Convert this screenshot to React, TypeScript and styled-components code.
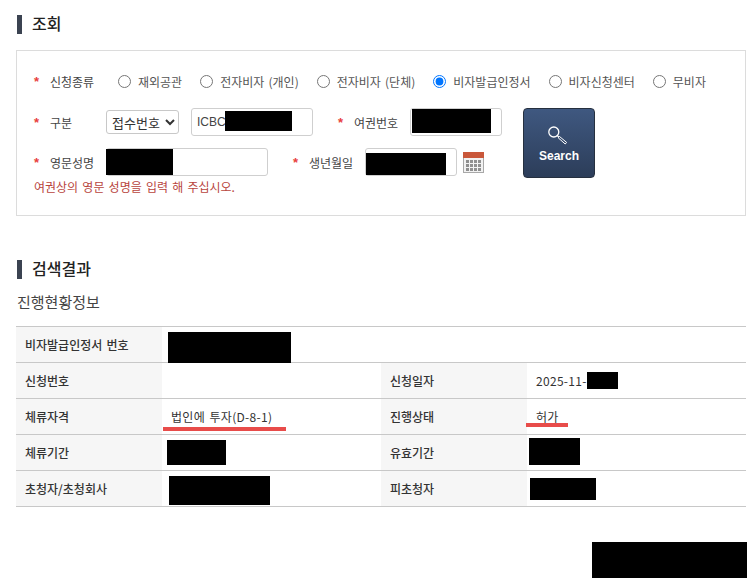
import React from "react";
import styled, { createGlobalStyle } from "styled-components";

const GlobalStyle = createGlobalStyle`
  html, body {
    margin: 0;
    padding: 0;
    background: #fff;
  }
  body {
    width: 755px;
    height: 584px;
    overflow: hidden;
    font-family: "Noto Sans CJK KR", "Noto Sans", sans-serif;
    font-size: 12px;
    word-spacing: 1.5px;
    color: #333;
  }
`;

const Page = styled.div`
  position: relative;
  width: 755px;
  height: 584px;
  padding: 15px 9px 0 16px;
  box-sizing: border-box;
`;

const SectionTitle = styled.h2`
  display: flex;
  align-items: center;
  box-sizing: border-box;
  height: 19px;
  margin: 0 0 0 1px;
  padding: 0 0 2px 10px;
  border-left: 5px solid #3b4351;
  font-size: 16px;
  font-weight: 500;
  line-height: 17px;
  color: #222;
`;

const SearchPanel = styled.div`
  box-sizing: border-box;
  width: 730px;
  height: 166px;
  margin: 16px 0 44px;
  padding: 20px 0 0 17px;
  border: 1px solid #dcdcdc;
`;

const FormRow = styled.div<{ $height: number }>`
  display: flex;
  align-items: center;
  height: ${(props) => props.$height}px;
`;

const RadioRow = styled(FormRow)`
  margin-bottom: 17px;
`;

const FormBody = styled.div`
  display: flex;
  height: 70px;
`;

const FieldColumn = styled.div`
  width: 489px;
`;

const FieldRows = styled.div`
  display: flex;
  flex-direction: column;
  gap: 12px;
`;

const FieldLabel = styled.label<{ $width: number; $gap?: number }>`
  display: flex;
  align-items: center;
  flex: none;
  width: ${(props) => props.$width}px;
  margin-left: ${(props) => props.$gap ?? 0}px;
  white-space: nowrap;
  color: #444;

  &::before {
    content: "*";
    width: 16px;
    flex: none;
    color: #e8403c;
    font-family: "Liberation Sans", sans-serif;
    font-size: 13px;
    font-weight: 700;
  }
`;

const RadioGroup = styled.div`
  display: flex;
  align-items: center;
  gap: 18px;
  margin-left: 18px;
`;

const RadioItem = styled.label`
  display: flex;
  align-items: center;
  gap: 7px;
  white-space: nowrap;
  color: #555;
`;

const RadioInput = styled.input`
  width: 13px;
  height: 13px;
  margin: 0;
`;

const SelectBox = styled.select`
  box-sizing: border-box;
  width: 73px;
  height: 24px;
  margin-right: 12px;
  padding: 0 0 0 1px;
  border: 1px solid #c8c8c8;
  border-radius: 3px;
  background: #fff;
  color: #333;
  font-family: inherit;
  font-size: 13px;
`;

const InputBox = styled.div<{ $width: number }>`
  position: relative;
  box-sizing: border-box;
  flex: none;
  width: ${(props) => props.$width}px;
  height: 28px;
  padding-left: 5px;
  border: 1px solid #cfcfcf;
  border-radius: 3px;
  background: #fff;
  font-family: "Liberation Sans", sans-serif;
  font-size: 12px;
  line-height: 26px;
  color: #444;
`;

const Redaction = styled.div<{ $x: number; $y: number; $w: number; $h: number }>`
  position: absolute;
  left: ${(props) => props.$x}px;
  top: ${(props) => props.$y}px;
  width: ${(props) => props.$w}px;
  height: ${(props) => props.$h}px;
  background: #000;
`;

const CalendarButton = styled.span`
  display: flex;
  margin-left: 6px;
`;

const HintText = styled.p`
  margin: 2px 0 0;
  line-height: 18px;
  color: #b8453d;
`;

const SearchButton = styled.button`
  display: flex;
  flex-direction: column;
  align-items: center;
  box-sizing: border-box;
  width: 72px;
  height: 70px;
  padding: 15px 0 0;
  border: 1px solid #26303f;
  border-radius: 4px;
  background: linear-gradient(#3f5880, #2c3d59);
  color: #fff;
  font-family: "Liberation Sans", sans-serif;
  font-size: 12px;
  font-weight: 700;
`;

const SearchCaption = styled.span`
  margin-top: 3px;
  line-height: 14px;
`;

const SubTitle = styled.h3`
  margin: 13px 0 14px 1px;
  font-size: 15px;
  font-weight: 400;
  line-height: 20px;
  color: #444;
`;

const ResultTable = styled.table`
  width: 730px;
  table-layout: fixed;
  border-collapse: collapse;
  border-top: 1px solid #c8c8c8;
`;

const Row = styled.tr`
  height: 36px;
  border-bottom: 1px solid #c8c8c8;
`;

const HeadCell = styled.th`
  width: 146px;
  box-sizing: border-box;
  padding: 0 0 0 9px;
  background: #f6f6f6;
  text-align: left;
  font-size: 12px;
  font-weight: 500;
  white-space: nowrap;
  color: #333;
`;

const ValueCell = styled.td`
  position: relative;
  padding: 0 0 0 9px;
  font-size: 12px;
  letter-spacing: 0.3px;
  white-space: nowrap;
  color: #333;
`;

const Underline = styled.div<{ $x: number; $y: number; $w: number }>`
  position: absolute;
  left: ${(props) => props.$x}px;
  top: ${(props) => props.$y}px;
  width: ${(props) => props.$w}px;
  height: 4px;
  background: #e84c4a;
`;

const CornerRedaction = styled.div`
  position: absolute;
  left: 592px;
  top: 542px;
  width: 155px;
  height: 36px;
  background: #000;
`;

const radioOptions = [
  { label: "재외공관", checked: false },
  { label: "전자비자 (개인)", checked: false },
  { label: "전자비자 (단체)", checked: false },
  { label: "비자발급인정서", checked: true },
  { label: "비자신청센터", checked: false },
  { label: "무비자", checked: false },
];

const SearchIcon = () => (
  <svg width="22" height="22" viewBox="0 0 22 22" fill="none" stroke="#fff">
    <circle cx="5.8" cy="8" r="5" strokeWidth="1.3" />
    <path d="M9.4 11.6l1.4 1.4" strokeWidth="1.3" />
    <path d="M11.4 12.4l7.2 6-1.4 1.6-7-6.2z" strokeWidth="1" />
  </svg>
);

const CalendarIcon = () => (
  <svg width="21" height="21" viewBox="0 0 21 21">
    <rect x="0.5" y="0.5" width="20" height="20" fill="#f2f2f2" stroke="#a8a8a8" />
    <rect x="0" y="0" width="21" height="6" fill="#c9573a" />
    {[0, 1, 2, 3].map((col) =>
      [0, 1, 2].map((row) => (
        <rect key={`${col}-${row}`} x={3 + col * 4} y={8 + row * 4} width="3" height="3" fill="#8f8f8f" />
      ))
    )}
  </svg>
);

const App = () => {
  return (
    <Page>
      <GlobalStyle />
      <SectionTitle>조회</SectionTitle>
      <SearchPanel>
        <RadioRow $height={20}>
          <FieldLabel $width={66}>신청종류</FieldLabel>
          <RadioGroup>
            {radioOptions.map((option) => (
              <RadioItem key={option.label}>
                <RadioInput type="radio" name="kind" defaultChecked={option.checked} />
                {option.label}
              </RadioItem>
            ))}
          </RadioGroup>
        </RadioRow>
        <FormBody>
          <FieldColumn>
            <FieldRows>
              <FormRow $height={28}>
                <FieldLabel $width={72}>구분</FieldLabel>
                <SelectBox defaultValue="접수번호">
                  <option>접수번호</option>
                </SelectBox>
                <InputBox $width={122}>
                  ICBC
                  <Redaction $x={33} $y={2} $w={67} $h={20} />
                </InputBox>
                <FieldLabel $width={72} $gap={25}>여권번호</FieldLabel>
                <InputBox $width={92}>
                  <Redaction $x={1} $y={0} $w={79} $h={24} />
                </InputBox>
              </FormRow>
              <FormRow $height={28}>
                <FieldLabel $width={72}>영문성명</FieldLabel>
                <InputBox $width={162}>
                  <Redaction $x={-1} $y={0} $w={67} $h={26} />
                </InputBox>
                <FieldLabel $width={72} $gap={25}>생년월일</FieldLabel>
                <InputBox $width={92}>
                  <Redaction $x={0} $y={4} $w={80} $h={22} />
                </InputBox>
                <CalendarButton>
                  <CalendarIcon />
                </CalendarButton>
              </FormRow>
            </FieldRows>
            <HintText>여권상의 영문 성명을 입력 해 주십시오.</HintText>
          </FieldColumn>
          <SearchButton type="button">
            <SearchIcon />
            <SearchCaption>Search</SearchCaption>
          </SearchButton>
        </FormBody>
      </SearchPanel>
      <SectionTitle>검색결과</SectionTitle>
      <SubTitle>진행현황정보</SubTitle>
      <ResultTable>
        <colgroup>
          <col width="146" />
          <col width="219" />
          <col width="146" />
          <col width="219" />
        </colgroup>
        <tbody>
          <Row>
            <HeadCell>비자발급인정서 번호</HeadCell>
            <ValueCell colSpan={3}>
              <Redaction $x={6} $y={5} $w={123} $h={31} />
            </ValueCell>
          </Row>
          <Row>
            <HeadCell>신청번호</HeadCell>
            <ValueCell />
            <HeadCell>신청일자</HeadCell>
            <ValueCell>
              2025-11-
              <Redaction $x={60} $y={9} $w={31} $h={17} />
            </ValueCell>
          </Row>
          <Row>
            <HeadCell>체류자격</HeadCell>
            <ValueCell>
              법인에 투자(D-8-1)
              <Underline $x={1} $y={28} $w={123} />
            </ValueCell>
            <HeadCell>진행상태</HeadCell>
            <ValueCell>
              허가
              <Underline $x={-1} $y={24} $w={42} />
            </ValueCell>
          </Row>
          <Row>
            <HeadCell>체류기간</HeadCell>
            <ValueCell>
              <Redaction $x={5} $y={5} $w={59} $h={25} />
            </ValueCell>
            <HeadCell>유효기간</HeadCell>
            <ValueCell>
              <Redaction $x={2} $y={3} $w={51} $h={27} />
            </ValueCell>
          </Row>
          <Row>
            <HeadCell>초청자/초청회사</HeadCell>
            <ValueCell>
              <Redaction $x={7} $y={5} $w={101} $h={29} />
            </ValueCell>
            <HeadCell>피초청자</HeadCell>
            <ValueCell>
              <Redaction $x={3} $y={7} $w={66} $h={22} />
            </ValueCell>
          </Row>
        </tbody>
      </ResultTable>
      <CornerRedaction />
    </Page>
  );
};

export default App;
